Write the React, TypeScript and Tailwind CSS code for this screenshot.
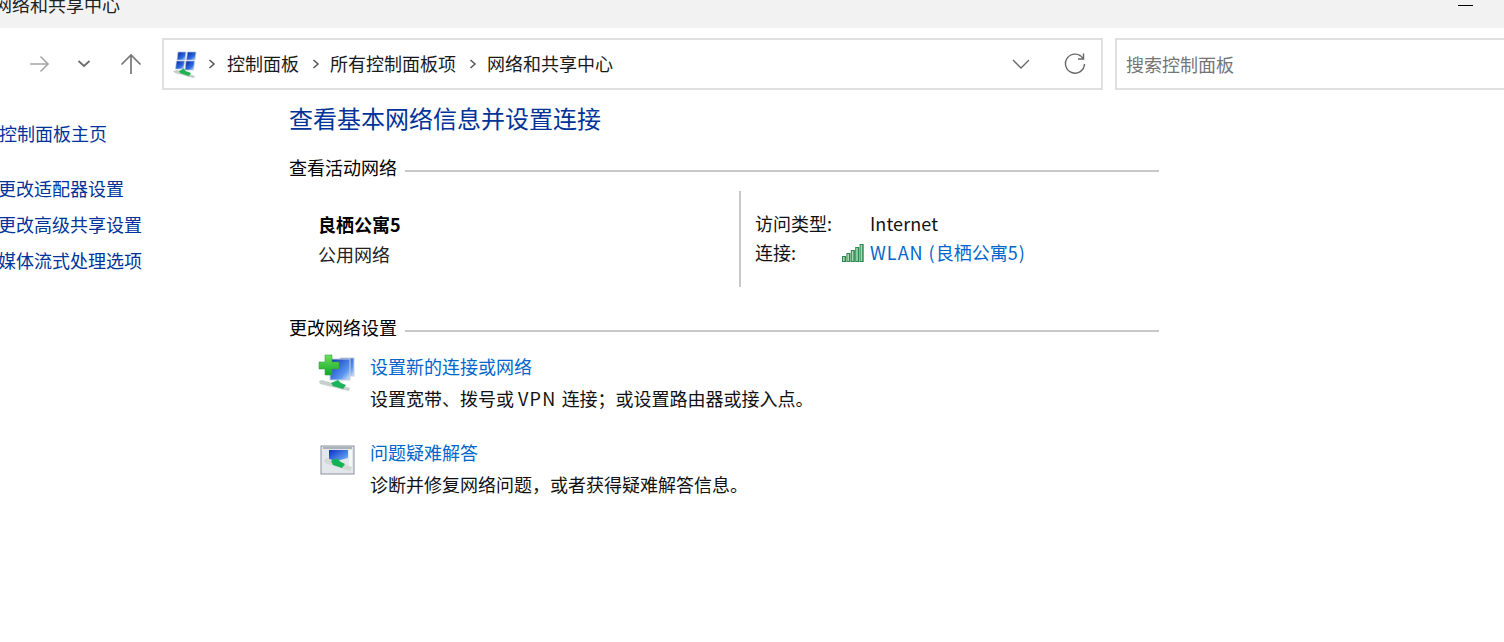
import React from "react";

const font = { fontFamily: '"Noto Sans CJK SC", "Noto Sans", sans-serif' };

function NetIcon() {
  return (
    <svg width="26" height="28" viewBox="0 0 26 28" className="blur-[0.3px]">
      <defs>
        <linearGradient id="pane" x1="0" y1="0" x2="1" y2="1">
          <stop offset="0" stopColor="#061fa8" />
          <stop offset="0.65" stopColor="#2f6fe0" />
          <stop offset="1" stopColor="#dbe9fb" />
        </linearGradient>
      </defs>
      <polygon points="6,2 14,2 13,10 5,10" fill="url(#pane)" stroke="#b5c4d6" strokeWidth="0.7" />
      <polygon points="15.5,2 24,2 23,10 14.5,10" fill="url(#pane)" stroke="#b5c4d6" strokeWidth="0.7" />
      <polygon points="4.5,11 12.5,11 11.5,19 3.5,19" fill="url(#pane)" stroke="#b5c4d6" strokeWidth="0.7" />
      <polygon points="14,11 22.5,11 21.5,20 13,20" fill="url(#pane)" stroke="#b5c4d6" strokeWidth="0.7" />
      <polygon points="1,21 5,20 23,26 22,28 17,27 3,23" fill="#c4cfc8" />
      <polygon points="7,21 12,18.5 13.5,21 19,23 17,26 8,23" fill="#1fb24f" />
    </svg>
  );
}

function Signal() {
  return (
    <svg width="22" height="18" viewBox="0 0 22 18">
      {[
        [0, 12, 6],
        [4.4, 9, 9],
        [8.8, 6, 12],
        [13.2, 3, 15],
        [17.6, 0, 18],
      ].map(([x, y, h]) => (
        <g key={x}>
          <rect x={x} y={y} width="4.1" height={h} fill="#2b8a50" />
          <rect x={x + 1} y={y + 1} width="1.6" height={h - 2} fill="#a6dab5" />
        </g>
      ))}
    </svg>
  );
}

function SetupIcon() {
  return (
    <svg width="38" height="38" viewBox="0 0 38 38" className="blur-[0.3px]">
      <defs>
        <linearGradient id="scr" x1="0" y1="0" x2="1" y2="1">
          <stop offset="0" stopColor="#0b2fc0" />
          <stop offset="0.7" stopColor="#5a97ee" />
          <stop offset="1" stopColor="#d6e6fa" />
        </linearGradient>
        <linearGradient id="plus" x1="0" y1="0" x2="0" y2="1">
          <stop offset="0" stopColor="#6fe05a" />
          <stop offset="1" stopColor="#12a82a" />
        </linearGradient>
      </defs>
      <rect x="22" y="4" width="14" height="18" fill="url(#scr)" stroke="#c5cfdd" />
      <rect x="12" y="5" width="20" height="21" fill="url(#scr)" stroke="#c5cfdd" />
      <polygon points="1,27 4,26 32,34 31,37 26,36 2,30" fill="#c8d0cc" />
      <polygon points="13,29 20,26 23,29 28,31 25,35 15,32" fill="#1cb45a" />
      <polygon points="7,1 14,1 14,8 21,8 21,15 14,15 14,21 7,21 7,15 1,15 1,8 7,8" fill="url(#plus)" stroke="#3aa04a" strokeWidth="0.6" />
    </svg>
  );
}

function TroubleIcon() {
  return (
    <svg width="36" height="32" viewBox="0 0 36 32" className="blur-[0.3px]">
      <defs>
        <linearGradient id="scr2" x1="0" y1="0" x2="1" y2="1">
          <stop offset="0" stopColor="#0b2fc0" />
          <stop offset="0.7" stopColor="#5a97ee" />
          <stop offset="1" stopColor="#d6e6fa" />
        </linearGradient>
      </defs>
      <rect x="1" y="1" width="33" height="28" fill="#e3e7ec" stroke="#8a929c" />
      <rect x="3" y="2" width="29" height="2" fill="#a9b1ba" />
      <polygon points="9,5 28,5 28,13 9,18" fill="url(#scr2)" />
      <rect x="29" y="5" width="3" height="20" fill="#f4f6f8" />
      <polygon points="4,15 7,13 32,22 31,26 26,25 5,18" fill="#d3dad6" />
      <polygon points="11,16 16,13 21,17 25,19 22,23 13,20" fill="#12b354" />
    </svg>
  );
}

function Section({ title }: { title: string }) {
  return (
    <div className="flex items-center h-[26px] w-[870px] gap-2">
      <span className="text-[18px] leading-[26px] text-black shrink-0 mb-[2px]">{title}</span>
      <div className="flex-1 h-[2px] bg-[#c8c8c8] mt-[5px]" />
    </div>
  );
}

function Crumb({ children }: { children: React.ReactNode }) {
  return <span className="text-[18px] leading-none text-[#1a1a1a]">{children}</span>;
}

function Sep() {
  return (
    <svg width="8" height="12" viewBox="0 0 8 12" className="shrink-0">
      <path d="M1.5 2 L6 6 L1.5 10" fill="none" stroke="#555" strokeWidth="1.5" />
    </svg>
  );
}

export default function App() {
  return (
    <div className="w-[1504px] h-[642px] overflow-hidden bg-white" style={font}>
      <div className="h-7 bg-[#f2f2f2] flex justify-between overflow-hidden">
        <span className="-ml-[6px] -mt-[9px] text-[18px] leading-[26px] text-[#222]">网络和共享中心</span>
        <div className="w-[15px] h-px bg-black mt-[5px] mr-[31px]" />
      </div>

      <div className="h-[72px] pt-[10px] flex items-start">
        <div className="w-[162px] h-[52px] flex items-center shrink-0">
          <svg width="24" height="24" viewBox="0 0 24 24" className="ml-[27px]">
            <path d="M3 12 H21 M13.5 4.5 L21 12 L13.5 19.5" fill="none" stroke="#a6a6a6" strokeWidth="1.6" />
          </svg>
          <svg width="14" height="10" viewBox="0 0 14 10" className="ml-[26px]">
            <path d="M1.5 2 L7 7 L12.5 2" fill="none" stroke="#6b6b6b" strokeWidth="1.7" />
          </svg>
          <svg width="24" height="24" viewBox="0 0 24 24" className="ml-[28px]">
            <path d="M12 22 V3 M2.5 12.5 L12 3 L21.5 12.5" fill="none" stroke="#777" strokeWidth="1.7" />
          </svg>
        </div>
        <div className="w-[941px] h-[52px] border-[#e0e0e0] flex items-center pl-[8px] shrink-0 [border-width:2px]">
          <NetIcon />
          <div className="ml-[10px]"><Sep /></div>
          <div className="ml-[11px]"><Crumb>控制面板</Crumb></div>
          <div className="ml-[13px]"><Sep /></div>
          <div className="ml-[10px]"><Crumb>所有控制面板项</Crumb></div>
          <div className="ml-[13px]"><Sep /></div>
          <div className="ml-[10px]"><Crumb>网络和共享中心</Crumb></div>
          <svg width="20" height="12" viewBox="0 0 20 12" className="ml-auto">
            <path d="M2 2 L10 10 L18 2" fill="none" stroke="#666" strokeWidth="1.3" />
          </svg>
          <svg width="24" height="24" viewBox="0 0 24 24" className="ml-[32px] mr-[14px]">
            <path d="M20 6.5 A9.5 9.5 0 1 0 21.5 12" fill="none" stroke="#666" strokeWidth="1.4" />
            <path d="M20.5 1.5 V7 H15" fill="none" stroke="#666" strokeWidth="1.4" />
          </svg>
        </div>
        <div className="ml-3 flex-1 h-[52px] border-[#e0e0e0] border-r-0 [border-width:2px] flex items-center pl-[9px]">
          <span className="text-[18px] text-[#757575]">搜索控制面板</span>
        </div>
      </div>

      <div className="flex">
        <div className="w-[289px] shrink-0 pt-[20px] text-[18px] leading-[26px] text-[#003399]">
          <div className="-ml-px">控制面板主页</div>
          <div className="-ml-[2px] mt-[29px]">更改适配器设置</div>
          <div className="-ml-[2px] mt-[10px]">更改高级共享设置</div>
          <div className="-ml-[2px] mt-[10px]">媒体流式处理选项</div>
        </div>

        <div className="flex-1">
          <h1 className="text-[24px] leading-[36px] text-[#003399] h-[36px]">查看基本网络信息并设置连接</h1>

          <div className="mt-[19px]"><Section title="查看活动网络" /></div>

          <div className="flex w-[870px] h-[96px] mt-[10px]">
            <div className="w-[452px] border-r-2 border-[#c8c8c8] pl-[29px] pt-[18px] text-[18px] leading-[30px]">
              <div className="font-bold text-black">良栖公寓5</div>
              <div className="text-[#222]">公用网络</div>
            </div>
            <div className="pl-[14px] pt-[18px] text-[18px] leading-[29px] text-[#111]">
              <div className="flex">
                <span className="w-[115px]">访问类型:</span>
                <span className="tracking-[0.1px]">Internet</span>
              </div>
              <div className="flex items-center">
                <span className="w-[87px]">连接:</span>
                <Signal />
                <span className="ml-[6px] text-[#0066cc]">
                  <span className="tracking-[1px]">WLAN (</span>良栖公寓<span className="tracking-[1px]">5)</span>
                </span>
              </div>
            </div>
          </div>

          <div className="mt-[28px]"><Section title="更改网络设置" /></div>

          <div className="flex mt-[7px] ml-[28px] h-[89px]">
            <div className="w-[53px] shrink-0 pt-[6px] pl-px"><SetupIcon /></div>
            <div className="text-[18px] leading-[32px]">
              <div className="text-[#0066cc] pt-[2px]">设置新的连接或网络</div>
              <div className="text-[#111]">
                设置宽带、拨号或 <span className="tracking-[1.2px]">VPN </span>连接；或设置路由器或接入点。
              </div>
            </div>
          </div>

          <div className="flex ml-[30px] h-[60px]">
            <div className="w-[51px] shrink-0 pt-[8px] pl-px"><TroubleIcon /></div>
            <div className="text-[18px] leading-[32px] -mt-px">
              <div className="text-[#0066cc]">问题疑难解答</div>
              <div className="text-[#111]">诊断并修复网络问题，或者获得疑难解答信息。</div>
            </div>
          </div>
        </div>
      </div>
    </div>
  );
}
